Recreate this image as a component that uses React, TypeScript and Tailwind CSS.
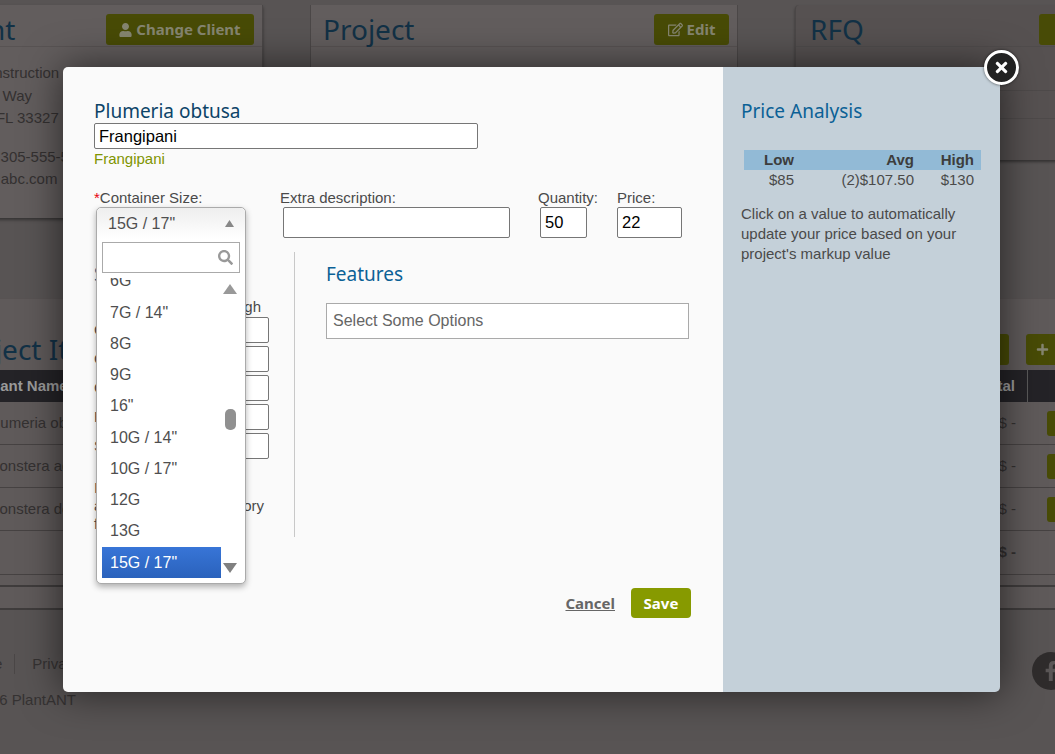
import { FaUser, FaRegEdit, FaPlus, FaSearch, FaFacebookF, FaTimes } from 'react-icons/fa';

const sizes = ['5G', '6G', '7G / 14"', '8G', '9G', '16"', '10G / 14"', '10G / 17"', '12G', '13G'];
const specRows = ['Caliper', 'Clear Trunk', 'Canopy', 'Height', 'Spread'];
const itemRows = ['Plumeria obtusa', 'Monstera adansonii', 'Monstera deliciosa'];

function BackgroundPage() {
  const titleClass = "text-[28px] leading-[31px] text-[#123146] font-['Noto_Sans',sans-serif]";
  const buttonClass = "h-[31px] shrink-0 bg-[#484b06] rounded-[3px] flex items-center justify-center gap-[4px] text-[#858570] font-bold text-[15px] font-['Noto_Sans',sans-serif]";

  return (
    <div className="w-[1230px] -ml-[150px] font-['Liberation_Sans',sans-serif] text-[15px] text-[#343131]">
      <div className="flex items-start pt-[5px]">
        <div className="w-[413px] h-[213px] shrink-0 bg-[#625d5d] border-r border-[#4b4747] shadow-[0_2px_3px_rgba(0,0,0,0.4)]">
          <div className="h-[42px] flex items-start justify-end pt-[9px] pr-[8px] border-b border-[#585353]">
            <span className={`${titleClass} mr-auto ml-[90px]`}>Client</span>
            <div className={`${buttonClass} w-[148px]`}>
              <FaUser className="w-[13px] h-[14px]" />
              Change Client
            </div>
          </div>
          <div className="pl-[90px] pt-[15px] leading-[22.5px]">
            <div>ABC Construction</div>
            <div className="-ml-[10px]">123 Some Way</div>
            <div className="-ml-[3px]">Weston, FL 33327</div>
            <div className="mt-[16px] -ml-[17px]">Telephone: 305-555-5555</div>
            <div className="-ml-[12px]">Email: jo@abc.com</div>
          </div>
        </div>
        <div className="w-[428px] h-[190px] shrink-0 ml-[47px] bg-[#625d5d] border-x border-[#4b4747]">
          <div className="h-[42px] flex items-start justify-between pt-[9px] pl-[12px] pr-[8px] border-b border-[#585353]">
            <span className={titleClass}>Project</span>
            <div className={`${buttonClass} w-[75px]`}>
              <FaRegEdit className="w-[15px] h-[15px]" />
              Edit
            </div>
          </div>
        </div>
        <div className="w-[405px] h-[155px] shrink-0 ml-[57px] border-l border-[#4b4747] bg-[#565151] shadow-[0_2px_3px_rgba(0,0,0,0.4)] rounded-t-[4px]">
          <div className="h-[42px] flex items-start justify-between pt-[9px] pl-[14px] border-b border-[#504c4c]">
            <span className={titleClass}>RFQ</span>
            <div className={`${buttonClass} w-[161px]`} />
          </div>
          <div className="h-[44px] border-b border-[#4e4a4a]" />
          <div className="h-[28px] border-b border-[#4e4a4a]" />
        </div>
      </div>

      <div className="mt-[80px] pt-[31px] border-t border-[#585353] bg-[#5f5a5a]">
        <div className="h-[40px] flex items-start pt-[4px] pl-[100px]">
          <span className={titleClass}>Project Items</span>
          <div className={`${buttonClass} ml-auto mr-[17px] w-[60px]`} />
          <div className={`${buttonClass} mr-[4px] w-[50px] justify-start pl-[10px]`}>
            <FaPlus className="w-[13px] h-[13px]" />
          </div>
        </div>
        <div className="h-[32px] bg-[#242327] flex items-center pl-[136px] pr-[52px] text-[#9a9a9a] font-bold">
          <span>Plant Name</span>
          <span className="ml-auto">Total</span>
          <span className="ml-[12px] h-full border-l border-[#5a5a5a]" />
        </div>
        {itemRows.map((name) => (
          <div key={name} className="h-[43px] flex items-center pl-[137px] border-b border-[#464242]">
            <span>{name}</span>
            <span className="ml-auto">$ -</span>
            <span className="ml-[31px] mr-[3px] w-[30px] h-[25px] bg-[#484b06] rounded-[3px]" />
          </div>
        ))}
        <div className="h-[44px] flex items-center border-b border-[#464242] font-bold pr-[64px] justify-end">$ -</div>
        <div className="h-[12px] border-b-2 border-[#3f3c3c]" />
        <div className="h-[23px] border-b-2 border-[#3f3c3c]" />
      </div>

      <div className="flex items-start justify-between pt-[42px] pr-[10px] text-[#353232]">
        <div>
          <div className="h-[24px] flex items-center pl-[64px]">
            <span>Terms of Use</span>
            <span className="ml-[12px] mr-[17px] h-[20px] border-l border-[#4b4747]" />
            <span>Privacy Policy</span>
          </div>
          <div className="mt-[13px] pl-[109px]">© 2016 PlantANT</div>
        </div>
        <div className="w-[38px] h-[38px] rounded-full bg-[#2f2c2c] flex items-center justify-center text-[#5a5656]">
          <FaFacebookF className="w-[20px] h-[20px]" />
        </div>
      </div>
    </div>
  );
}

function SizeDropdown() {
  return (
    <div className="absolute left-[33px] top-[140px] w-[150px] h-[377px] bg-white border border-[#aaaaaa] rounded-[5px] shadow-[0_3px_6px_rgba(0,0,0,0.3)] text-[16px] text-[#4f4f4f]">
      <div className="h-[31px] flex items-center justify-between pl-[11px] pr-[11px] rounded-t-[5px] bg-gradient-to-b from-[#eeeeee] to-white">
        <span>15G / 17"</span>
        <svg width="9" height="7" viewBox="0 0 9 7"><path d="M4.5 0L9 7H0z" fill="#888888" /></svg>
      </div>
      <div className="relative mx-[5px] mt-[3px] h-[31px] border border-[#aaaaaa]">
        <FaSearch className="absolute right-[6px] top-[7px] w-[15px] h-[15px] text-[#999999]" />
      </div>
      <div className="flex h-[300px] mt-[5px]">
        <div className="w-[124px] pl-[5px] overflow-hidden flex flex-col justify-end">
          {sizes.map((size) => (
            <div key={size} className="h-[31.25px] shrink-0 flex items-center pl-[8px]">{size}</div>
          ))}
          <div className="h-[31px] shrink-0 flex items-center pl-[8px] text-white bg-gradient-to-b from-[#3875d7] to-[#2a62bc]">15G / 17"</div>
        </div>
        <div className="flex-1 flex flex-col items-center pt-[6px] pr-[6px]">
          <svg width="14" height="10" viewBox="0 0 14 10"><path d="M7 0l7 10H0z" fill="#999999" /></svg>
          <div className="mt-[115px] w-[11px] h-[21px] rounded-[5px] bg-[#909090]" />
          <svg className="mt-[133px]" width="14" height="10" viewBox="0 0 14 10"><path d="M0 0h14L7 10z" fill="#808080" /></svg>
        </div>
      </div>
    </div>
  );
}

function ItemModal() {
  const inputClass = "border border-[#767676] rounded-[2px] bg-white px-[4px] text-[16.5px] text-black outline-none";
  const headingClass = "font-['Noto_Sans',sans-serif] text-[19px] leading-[22px]";

  return (
    <div className="absolute left-[63px] top-[67px] w-[937px] h-[625px] flex rounded-[5px] shadow-[0_0_40px_rgba(0,0,0,0.6)] font-['Liberation_Sans',sans-serif] text-[15px] text-[#4a4a4a]">
      <div className="relative w-[660px] bg-[#fafafa] rounded-l-[5px] pt-[33px] pl-[31px]">
        <h2 className={`${headingClass} text-[#0d4468]`}>Plumeria obtusa</h2>
        <input readOnly value="Frangipani" className={`${inputClass} block mt-[1px] w-[384px] h-[26px]`} />
        <div className="mt-[1px] leading-[18px] text-[#7f9400]">Frangipani</div>

        <div className="flex mt-[20px]">
          <div className="w-[186px]">
            <div className="leading-[19px]"><span className="text-red-600">*</span>Container Size:</div>
          </div>
          <div className="w-[258px]">
            <div className="leading-[19px]">Extra description:</div>
            <input readOnly className={`${inputClass} block ml-[3px] w-[227px] h-[31px]`} />
          </div>
          <div className="w-[79px]">
            <div className="leading-[19px]">Quantity:</div>
            <input readOnly value="50" className={`${inputClass} block ml-[2px] w-[47px] h-[31px]`} />
          </div>
          <div>
            <div className="leading-[19px]">Price:</div>
            <input readOnly value="22" className={`${inputClass} block w-[65px] h-[31px]`} />
          </div>
        </div>

        <div className="flex mt-[14px] h-[285px]">
          <div className="w-[201px] border-r border-[#c8c8c8] pt-[11px]">
            <h3 className={`${headingClass} text-[#0b6196]`}>Specifications</h3>
            <div className="mt-[13px] leading-[18px] w-[167px] text-right">Length / High</div>
            <div className="flex flex-col gap-[3px] w-[175px] mt-[1px]">
              {specRows.map((row) => (
                <div key={row} className="flex items-center justify-between">
                  <span>{row}</span>
                  <input readOnly className={`${inputClass} w-[60px] h-[26px]`} />
                </div>
              ))}
            </div>
            <p className="mt-[20px] leading-[18px]">If no sizes apply<br />add them to our inventory<br />for this plant</p>
          </div>
          <div className="pl-[31px] pt-[11px]">
            <h3 className={`${headingClass} text-[#0b6196]`}>Features</h3>
            <div className="mt-[18px] w-[363px] h-[36px] border border-[#aaaaaa] bg-white flex items-center pl-[6px] text-[16px] text-[#666666]">Select Some Options</div>
          </div>
        </div>

        <div className="flex justify-end items-center pr-[32px] mt-[51px] font-['Noto_Sans',sans-serif] text-[15px] font-bold">
          <span className="mr-[16px] underline text-[#666666]">Cancel</span>
          <span className="w-[60px] h-[30px] bg-[#879a00] rounded-[4px] text-white flex items-center justify-center">Save</span>
        </div>

        <SizeDropdown />
      </div>

      <div className="flex-1 bg-[#c4d0d9] rounded-r-[5px] pt-[33px] pl-[18px]">
        <h2 className={`${headingClass} text-[#0b6196]`}>Price Analysis</h2>
        <div className="ml-[3px] mt-[28px] w-[237px] text-[15px]">
          <div className="h-[20px] bg-[#92bad6] grid grid-cols-[50px_120px_60px] font-bold text-right leading-[20px] text-[#3d3d3d]">
            <span>Low</span>
            <span>Avg</span>
            <span>High</span>
          </div>
          <div className="h-[20px] grid grid-cols-[50px_120px_60px] text-right leading-[20px]">
            <span>$85</span>
            <span>(2)$107.50</span>
            <span>$130</span>
          </div>
        </div>
        <p className="mt-[14px] w-[240px] text-[15px] leading-[20px]">Click on a value to automatically update your price based on your project's markup value</p>
      </div>

      <div className="absolute left-[921px] -top-[17px] w-[35px] h-[35px] rounded-full bg-[#222222] border-[3px] border-white flex items-center justify-center text-white shadow-[0_0_3px_rgba(0,0,0,0.6)]">
        <FaTimes className="w-[17px] h-[17px]" />
      </div>
    </div>
  );
}

export default function App() {
  return (
    <div className="relative w-[1055px] h-[754px] overflow-hidden bg-[#585454]">
      <BackgroundPage />
      <ItemModal />
    </div>
  );
}
